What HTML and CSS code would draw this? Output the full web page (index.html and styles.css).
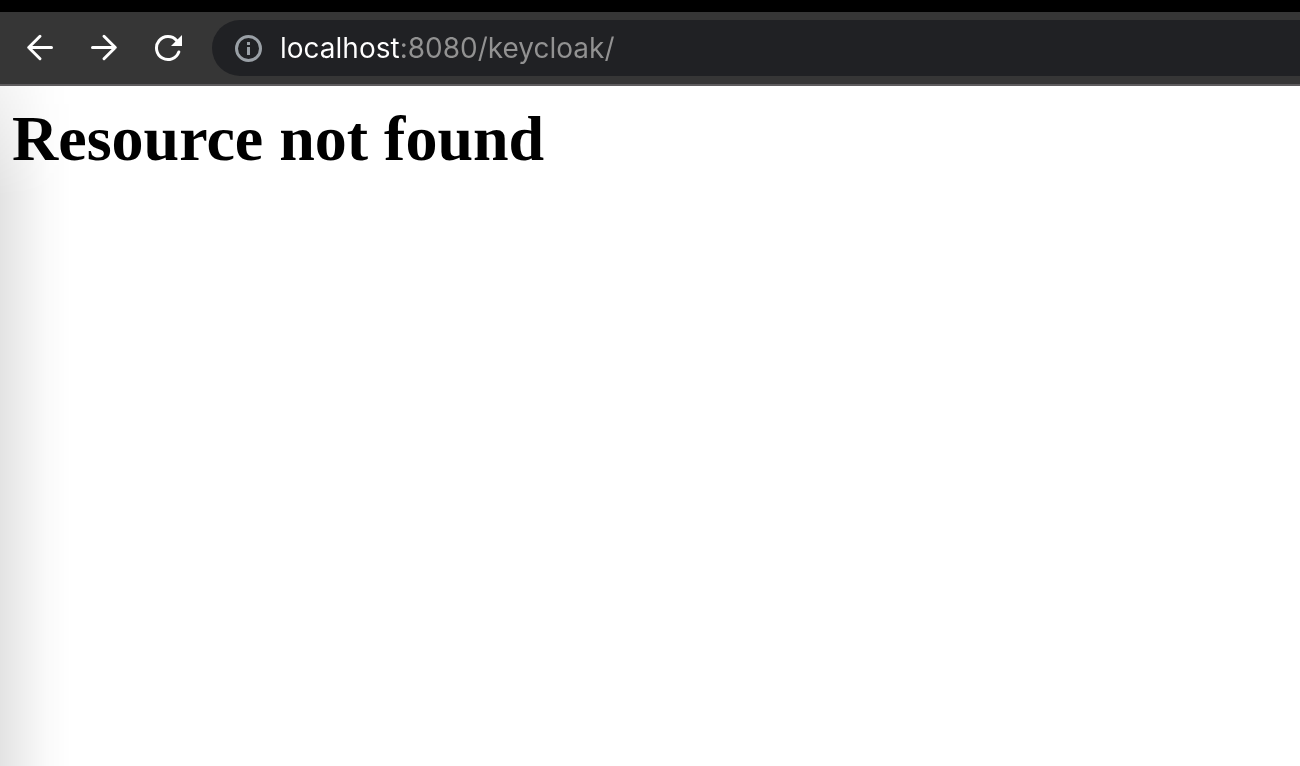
FILE: index.html
```
<!DOCTYPE html>
<html lang="en">
<head>
    <meta charset="UTF-8">
    <meta name="viewport" content="width=device-width, initial-scale=1.0">
    <title>Resource not found</title>
    <link rel="stylesheet" href="styles.css">
</head>
<body>
    <div class="tab-strip"></div>

    <header class="toolbar">
        <nav class="nav-buttons">
            <button type="button" aria-label="Back">
                <svg class="icon" viewBox="0 0 28 28">
                    <path d="M25.5 13.5H3M14 2.3L2.7 13.5L14 24.7"/>
                </svg>
            </button>
            <button type="button" aria-label="Forward">
                <svg class="icon" viewBox="0 0 28 28">
                    <path d="M2.5 13.5H25M14 2.3L25.3 13.5L14 24.7"/>
                </svg>
            </button>
            <button type="button" aria-label="Reload">
                <svg class="icon" viewBox="0 0 28 28">
                    <path d="M24.8 18A11.5 11.5 0 1 1 22.6 6.4"/>
                    <path class="solid" d="M28 1V12H17Z"/>
                </svg>
            </button>
        </nav>

        <div class="address-bar">
            <label for="address" aria-label="Address">
                <svg class="icon info" viewBox="0 0 28 28">
                    <circle cx="14.5" cy="14.5" r="12"/>
                    <path class="solid" d="M13 8h3v3h-3zM13 13h3v8h-3z"/>
                </svg>
            </label>
            <input id="address" class="address" type="text" value="localhost:8080/keycloak/" spellcheck="false">
        </div>
    </header>

    <main class="page">
        <h1>Resource not found</h1>
    </main>
</body>
</html>
```
FILE: styles.css
```
* {
    box-sizing: border-box;
}

body {
    margin: 0;
    min-height: 100vh;
    display: flex;
    flex-direction: column;
    background: #fff;
}

.tab-strip {
    height: 12px;
    background: #000;
}

.toolbar {
    display: flex;
    align-items: center;
    gap: 12px;
    padding: 8px 0 8px 8px;
    background: #363636;
    border-bottom: 2px solid #5e5c5e;
}

.nav-buttons {
    display: flex;
}

.nav-buttons button {
    display: flex;
    align-items: center;
    justify-content: center;
    width: 64px;
    height: 56px;
    padding: 0;
    border: 0;
    background: none;
    color: #fff;
    cursor: pointer;
}

.icon {
    display: block;
    width: 28px;
    height: 28px;
    fill: none;
    stroke: currentColor;
    stroke-width: 3;
    stroke-linecap: round;
    stroke-linejoin: round;
}

.icon .solid {
    fill: currentColor;
    stroke: none;
}

.address-bar {
    flex: 1;
    display: flex;
    align-items: center;
    gap: 18px;
    height: 56px;
    padding-left: 22px;
    border-radius: 28px 0 0 28px;
    background: #202124;
}

.info {
    color: #9aa0a6;
}

/* host name is brighter than the port and path */
.address {
    flex: 1;
    min-width: 0;
    height: 40px;
    padding: 0;
    border: 0;
    outline: 0;
    font: 28px/40px Inter, "Liberation Sans", sans-serif;
    color: transparent;
    background: linear-gradient(to right, #fff 120px, #929292 120px);
    -webkit-background-clip: text;
    background-clip: text;
}

.page {
    position: relative;
    flex: 1;
    padding: 16px 12px;
}

/* shadow cast from the left edge of the window */
.page::before {
    content: "";
    position: absolute;
    top: 0;
    bottom: 0;
    left: 0;
    width: 72px;
    background: linear-gradient(to right, rgba(0, 0, 0, 0.11), rgba(0, 0, 0, 0.06) 36%, rgba(0, 0, 0, 0.02) 65%, rgba(0, 0, 0, 0));
    -webkit-mask-image: linear-gradient(rgba(0, 0, 0, 0.4), #000 110px);
    mask-image: linear-gradient(rgba(0, 0, 0, 0.4), #000 110px);
}

h1 {
    position: relative;
    margin: 0;
    font: bold 64px/74px "Liberation Serif", "Times New Roman", serif;
    color: #000;
}
```
